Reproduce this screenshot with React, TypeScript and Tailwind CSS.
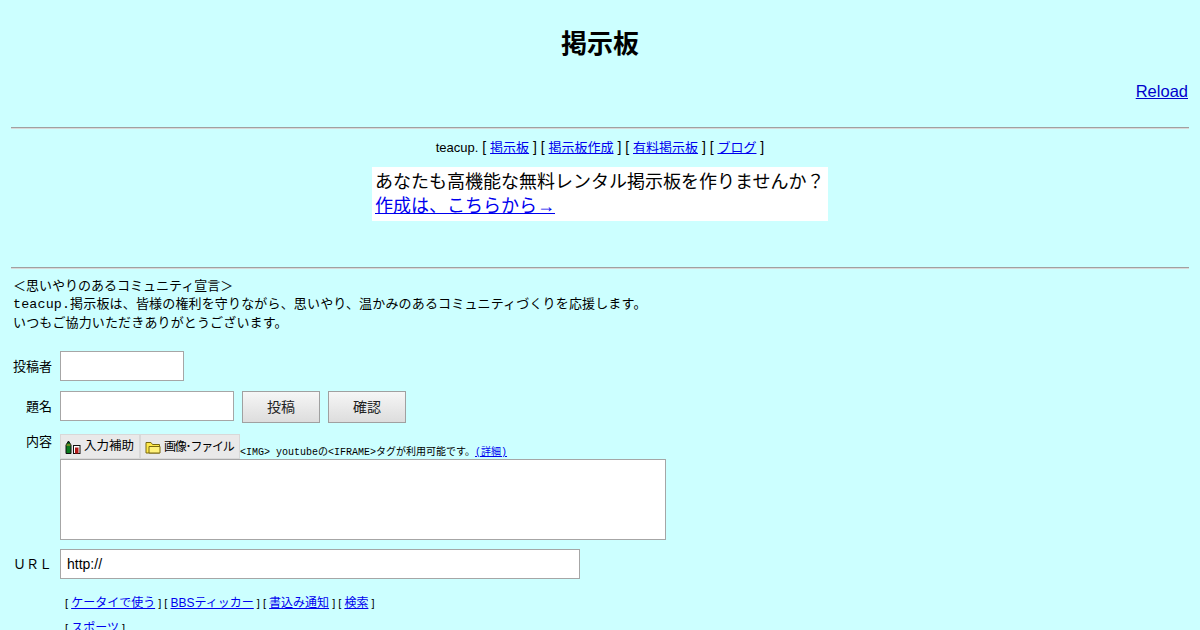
const cjk = "font-['Liberation_Sans','Noto_Sans_CJK_JP',sans-serif]";
const mono = "font-['Liberation_Mono','Noto_Sans_CJK_JP',monospace]";

// brackets are set in a bigger size than the links, as on the original page
function Nav({ items, linkSize }: { items: string[]; linkSize: string }) {
  return (
    <>
      {items.map((item) => (
        <span key={item}>
          [ <a href="#" className={`${linkSize} text-[#0000ee] underline`}>{item}</a> ]{' '}
        </span>
      ))}
    </>
  );
}

function PencilIcon() {
  return (
    <svg width="16" height="14" viewBox="0 0 16 14" className="shrink-0">
      <path d="M1 13.5V5l2.5-4L6 5v8.5z" fill="#0a7a1e" stroke="#111" />
      <path d="M2.6 2.5h1.8L3.5 1z" fill="#111" />
      <path d="M1.5 5h4" stroke="#c9a227" />
      <rect x="8.5" y="5.5" width="6.5" height="8" fill="#fff" stroke="#111" />
      <rect x="10" y="7.5" width="3.5" height="6" fill="#b01818" />
    </svg>
  );
}

function FolderIcon() {
  return (
    <svg width="16" height="14" viewBox="0 0 16 14" className="shrink-0">
      <path d="M1 13V2.5h5l1.5 2h7V13z" fill="#ffe94a" stroke="#7a6a10" />
      <path d="M4 13V6.5h11V13z" fill="#fff27a" stroke="#7a6a10" />
    </svg>
  );
}

function ImageButton({ icon, label, width, text }: { icon: React.ReactNode; label: string; width: string; text: string }) {
  return (
    <div className={`flex h-[25px] ${width} items-center gap-[3px] border border-[#d8d8d8] bg-[#e9e9e9] pl-[4px] leading-none text-black ${text}`}>
      {icon}
      <span className="whitespace-nowrap">{label}</span>
    </div>
  );
}

export default function App() {
  return (
    <div className={`${cjk} h-[630px] overflow-hidden bg-[#ccffff] px-[11px] text-black`}>
      <h1 className="pt-[28px] text-center text-[26px] leading-[32px] font-bold">掲示板</h1>

      <div className="mt-[21px] pr-px text-right text-[16.5px] leading-[20px]">
        <a href="#" className="text-[#0000cc] underline">Reload</a>
      </div>

      <hr className="mt-[26px] h-[2px] border-0 border-t border-b border-t-[#a0a0a0] border-b-[#d8d8d8]" />

      <p className="mt-[9px] text-center text-[14px] leading-[19px]">
        <span className="text-[13px]">teacup.</span> <Nav items={['掲示板', '掲示板作成', '有料掲示板', 'ブログ']} linkSize="text-[13px]" />
      </p>

      <div className="mt-[10px] flex justify-center">
        <div className="w-[456px] bg-white p-[3px] text-[18px] leading-[24px]">
          あなたも高機能な無料レンタル掲示板を作りませんか？
          <br />
          <a href="#" className="text-[#0000ee] underline">作成は、こちらから→</a>
        </div>
      </div>

      <hr className="mt-[46px] h-[2px] border-0 border-t border-b border-t-[#a0a0a0] border-b-[#d8d8d8]" />

      <div className="mt-[8px] pl-[2px] text-[13px] leading-[18px]">
        <p>＜思いやりのあるコミュニティ宣言＞</p>
        <p className="tracking-[0.16px]"><span className={`${mono} text-[13.33px]`}>teacup.</span>掲示板は、皆様の権利を守りながら、思いやり、温かみのあるコミュニティづくりを応援します。</p>
        <p className="tracking-[0.14px]">いつもご協力いただきありがとうございます。</p>
      </div>

      <div className="mt-[19px] grid grid-cols-[41px_1fr] gap-x-[8px] text-[13px]">
        <div className="flex h-[30px] items-center justify-end pt-[2px] whitespace-nowrap">投稿者</div>
        <input className="h-[30px] w-[124px] border border-[#a6a6a6] bg-white" />

        <div className="mt-[10px] flex h-[30px] items-center justify-end pt-[2px]">題名</div>
        <div className="mt-[10px] flex gap-[8px]">
          <input className="h-[30px] w-[174px] border border-[#a6a6a6] bg-white" />
          <button className="h-[32px] w-[78px] border border-[#a0a0a0] bg-gradient-to-b from-[#f6f6f6] to-[#dddddd] text-[14px] text-[#222]">投稿</button>
          <button className="h-[32px] w-[78px] border border-[#a0a0a0] bg-gradient-to-b from-[#f6f6f6] to-[#dddddd] text-[14px] text-[#222]">確認</button>
        </div>

        <div className="mt-[11px] flex justify-end leading-[16px]">内容</div>
        <div className="mt-[11px]">
          <div className="flex items-end">
            <ImageButton icon={<PencilIcon />} label="入力補助" width="w-[80px]" text="text-[12.5px]" />
            <ImageButton icon={<FolderIcon />} label="画像･ファイル" width="w-[100px]" text="text-[12px] tracking-[-1.2px]" />
            <span className={`${mono} text-[10px] leading-[12px] whitespace-nowrap`}>
              {'<IMG> youtubeの<IFRAME>タグが利用可能です。'}
              <a href="#" className="text-[#0000ee] underline">(詳細)</a>
            </span>
          </div>
          <textarea className="block h-[81px] w-[606px] resize-none border border-[#a6a6a6] bg-white" />
        </div>

        <div className="mt-[9px] flex h-[30px] items-center justify-end pt-[2px] whitespace-nowrap">ＵＲＬ</div>
        <input defaultValue="http://" className="mt-[9px] h-[30px] w-[520px] border border-[#a6a6a6] bg-white px-[6px] text-[14px] text-black" />

        <div />
        <p className="mt-[15px] pl-[5px] text-[11px] leading-[18px]">
          <Nav items={['ケータイで使う', 'BBSティッカー', '書込み通知', '検索']} linkSize="text-[12px]" />
        </p>
        <div />
        <p className="mt-[7px] pl-[5px] text-[11px] leading-[18px]">
          <Nav items={['スポーツ']} linkSize="text-[12px]" />
        </p>
      </div>
    </div>
  );
}
